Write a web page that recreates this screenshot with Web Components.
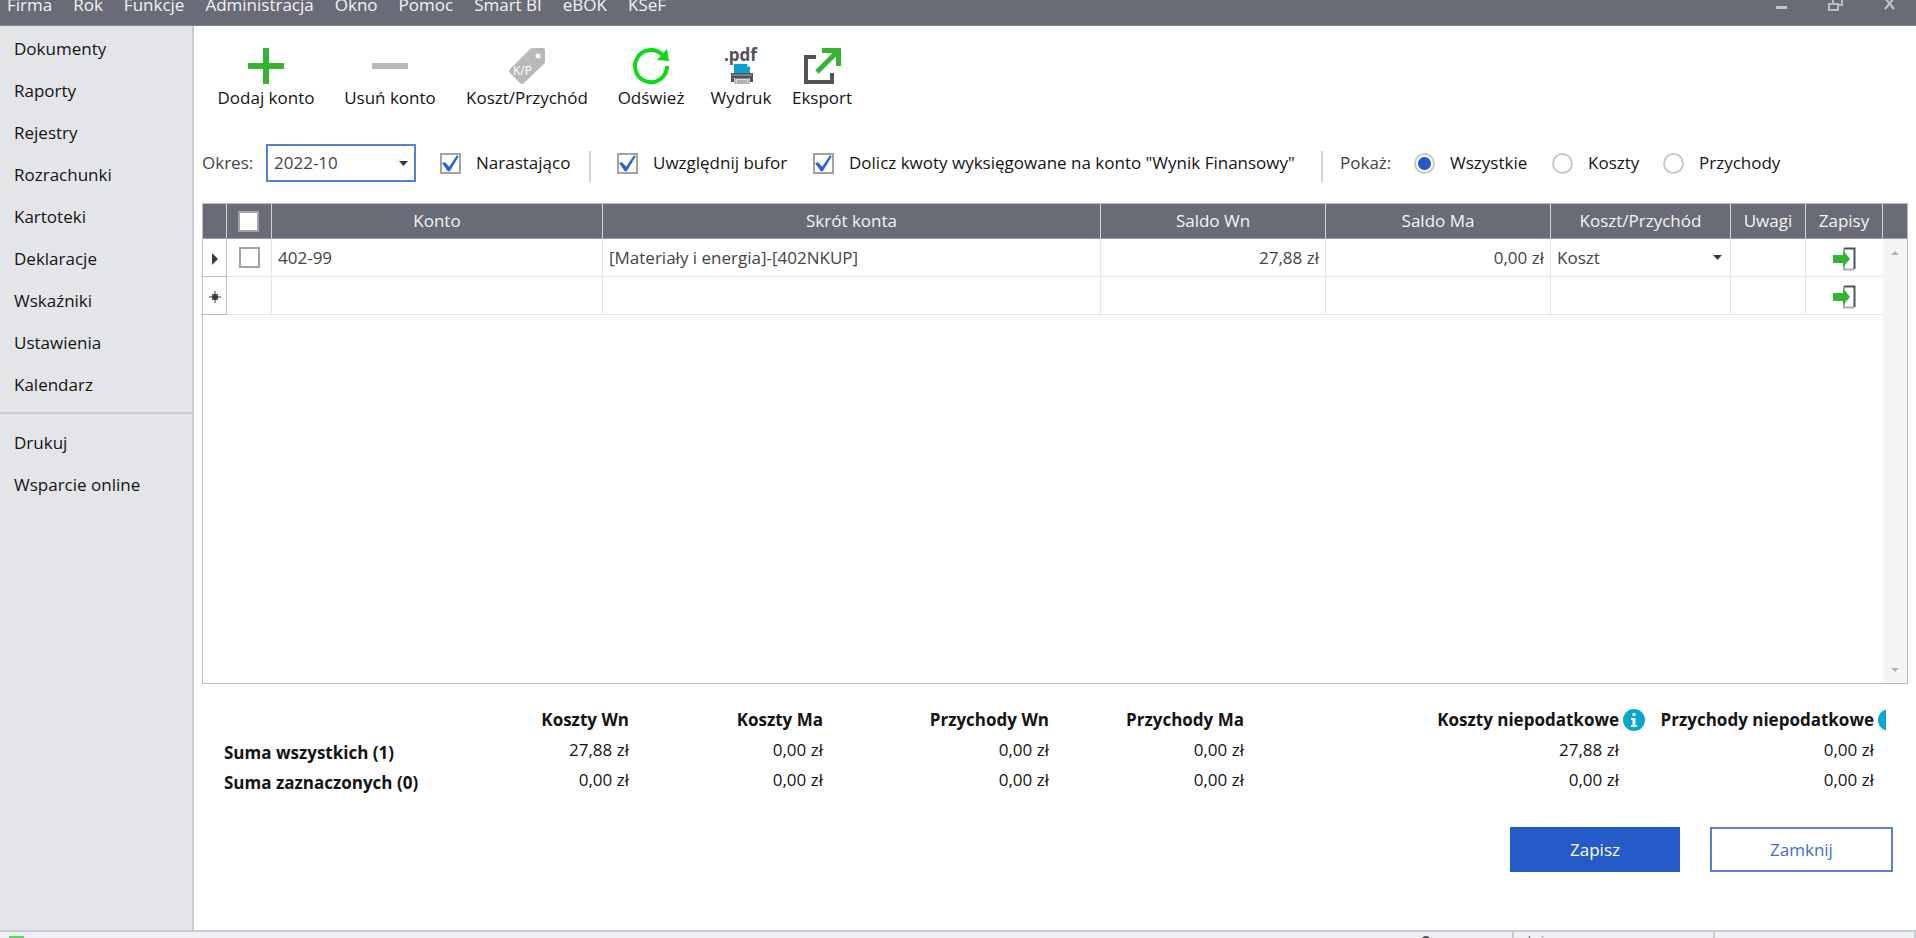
<!DOCTYPE html>
<html lang="pl">
<head>
<meta charset="utf-8">
<title>Koszty i przychody niepodatkowe</title>
<style>
  :root {
    --bar: #696c77;
    --line: #c8cbd4;
    --frame: #bcbcbc;
    --cell-line: #e6e6e6;
    --accent: #255bc9;
    --green: #37b334;
    --ink: #141414;
    --ink-soft: #444;
  }

  body {
    margin: 0;
    font: 17px/24px "Open Sans", "Noto Sans", sans-serif;
    color: var(--ink);
    background: #fff;
  }
</style>
</head>
<body>
<account-app></account-app>

<script>
const ARROW_DOWN = '<svg class="caret" width="9" height="5" viewBox="0 0 9 5" aria-hidden="true"><path d="M0 0h9L4.500 5z" fill="#3a3a3a"/></svg>';

const ICONS = {
  add: '<path d="M18 0v36M0 18h36" stroke="#37b334" stroke-width="6"/>',
  remove: '<path d="M0 18h36" stroke="#b9b9b7" stroke-width="6"/>',
  tag: `
    <path fill-rule="evenodd" fill="#b9b9b7" d="M21 1Q22 0 24 0h10q2 0 2 2v11q0 2-1 3L15 35q-2 2-4 0L1 25q-2-2 0-4zM29 5.500a2.500 2.500 0 1 0 0 5 2.500 2.500 0 0 0 0-5z"/>
    <text x="4" y="27" font-size="12" fill="#fff">K/P</text>`,
  refresh: `
    <path d="M34 18A16 16 0 1 1 29 6.500" fill="none" stroke="#09dc15" stroke-width="4"/>
    <path d="M34 1l2 12-12-1z" fill="#09dc15"/>`,
  pdf: `
    <text x="1" y="13" font-size="17" font-weight="700" fill="#50535a">.pdf</text>
    <path d="M11 16h13l3 3v6H11z" fill="#0aa2d3"/>
    <path d="M24 16v3h3z" fill="#9bdcf0"/>
    <path d="M8 25h22v9h-3v-4H11v4H8z" fill="#50535a"/>
    <path d="M9 27h20" stroke="#a7a9ad"/>
    <path d="M12 30h14v6H12z" fill="#dcdcdc"/>
    <path d="M12 36V30.500h14V36M14 33h10M14 35h10" fill="none" stroke="#85878c"/>`,
  export: `
    <path d="M12 9H2v25h26v-9" fill="none" stroke="#50535a" stroke-width="4"/>
    <path d="M13 24L33 4" stroke="#37b334" stroke-width="5"/>
    <path d="M18 0h19v18h-5V5H18z" fill="#37b334"/>`
};

class BaseElement extends HTMLElement {
  constructor() {
    super();
    this.attachShadow({ mode: 'open' });
  }

  connectedCallback() {
    this.shadowRoot.innerHTML = this.render();
  }
}

class MenuBar extends BaseElement {
  render() {
    const items = ['Firma', 'Rok', 'Funkcje', 'Administracja', 'Okno', 'Pomoc', 'Smart BI', 'eBOK', 'KSeF'];
    return `
      <style>
        :host {
          display: flex;
          justify-content: space-between;
          padding: 0 20px 15px 7px;
          background: var(--bar);
          border-bottom: 1px solid #85878f;
        }
        nav, .window { display: flex; }
        nav { gap: 21px; }
        .window { gap: 40px; }
        button {
          height: 10px;
          padding: 0;
          border: 0;
          background: none;
          color: #f2f2f2;
          font: inherit;
          line-height: 10px;
          white-space: nowrap;
        }
        svg { display: block; }
      </style>
      <nav>${items.map((item) => `<button type="button">${item}</button>`).join('')}</nav>
      <div class="window">
        <button type="button" aria-label="Minimalizuj">
          <svg width="12" height="12"><path d="M0 7.500h11" stroke="#c6c6ca" stroke-width="3"/></svg>
        </button>
        <button type="button" aria-label="Przywróć">
          <svg width="16" height="12"><path d="M1 4h9v6H1zM5 3V-2h9v7h-4" fill="none" stroke="#b9babf" stroke-width="2"/></svg>
        </button>
        <button type="button" aria-label="Zamknij okno">
          <svg width="12" height="12"><path d="M1-2l9 11M10-2L1 9" stroke="#c6c6ca" stroke-width="2"/></svg>
        </button>
      </div>
    `;
  }
}

class SideNav extends BaseElement {
  render() {
    const link = (text) => `<a href="#">${text}</a>`;
    const main = ['Dokumenty', 'Raporty', 'Rejestry', 'Rozrachunki', 'Kartoteki', 'Deklaracje', 'Wskaźniki', 'Ustawienia', 'Kalendarz'];
    const extra = ['Drukuj', 'Wsparcie online'];
    return `
      <style>
        :host {
          display: block;
          flex: none;
          width: 192px;
          padding-top: 2px;
          background: #e4e5e9;
          border-right: 2px solid var(--line);
        }
        a {
          display: block;
          padding: 9px 14px;
          color: var(--ink);
          text-decoration: none;
        }
        hr {
          margin: 6px 0 8px;
          border: 0;
          border-top: 2px solid var(--line);
        }
      </style>
      <nav>${main.map(link).join('')}<hr>${extra.map(link).join('')}</nav>
    `;
  }
}

class ToolButton extends BaseElement {
  render() {
    return `
      <style>
        :host { display: block; }
        button {
          display: flex;
          flex-direction: column;
          align-items: center;
          gap: 2px;
          width: 100%;
          padding: 0;
          border: 0;
          background: none;
          color: var(--ink);
          font: inherit;
          white-space: nowrap;
        }
        svg { overflow: visible; }
      </style>
      <button type="button">
        <svg width="36" height="36" viewBox="0 0 36 36" aria-hidden="true">${ICONS[this.getAttribute('icon')]}</svg>
        <slot></slot>
      </button>
    `;
  }
}

class CheckField extends BaseElement {
  render() {
    return `
      <style>
        :host { display: block; }
        label {
          display: flex;
          align-items: center;
          gap: 15px;
          white-space: nowrap;
        }
        input {
          flex: none;
          display: grid;
          appearance: none;
          width: 21px;
          height: 21px;
          margin: 0;
          border: 2px solid #a3a3a3;
          background: #fff;
        }
        input:checked::before {
          content: "";
          background: #2c62d2;
          clip-path: polygon(0 50%, 18% 45%, 42% 72%, 88% 4%, 98% 12%, 46% 98%, 34% 98%);
        }
      </style>
      <label><input type="checkbox" ${this.hasAttribute('checked') ? 'checked' : ''}><slot></slot></label>
    `;
  }
}

class ShowFilter extends BaseElement {
  render() {
    return `
      <style>
        :host { display: block; }
        fieldset {
          display: grid;
          grid-template-columns: 74px 138px 111px auto;
          align-items: center;
          margin: 0;
          padding: 0;
          border: 0;
        }
        span { color: var(--ink-soft); }
        label {
          display: flex;
          align-items: center;
          gap: 15px;
        }
        input {
          flex: none;
          appearance: none;
          width: 21px;
          height: 21px;
          margin: 0;
          border: 2px solid #c9c9c9;
          border-radius: 50%;
          background: #fff;
        }
        input:checked {
          background: radial-gradient(circle, var(--accent) 6px, #fff 7px);
        }
      </style>
      <fieldset aria-labelledby="show">
        <span id="show">Pokaż:</span>
        <label><input type="radio" name="show" checked>Wszystkie</label>
        <label><input type="radio" name="show">Koszty</label>
        <label><input type="radio" name="show">Przychody</label>
      </fieldset>
    `;
  }
}

class FilterRow extends BaseElement {
  render() {
    return `
      <style>
        :host {
          display: grid;
          grid-template-columns: 64px 174px 149px 28px 196px 508px 19px auto;
          align-items: center;
          justify-content: start;
        }
        .okres { color: var(--ink-soft); }
        .period {
          display: grid;
          align-items: center;
          width: 150px;
        }
        .period > * { grid-area: 1 / 1; }
        select {
          appearance: none;
          height: 38px;
          padding: 0 6px;
          border: 2px solid #5580d6;
          border-radius: 0;
          background: #fff;
          color: var(--ink-soft);
          font: inherit;
        }
        .caret {
          justify-self: end;
          margin-right: 8px;
          pointer-events: none;
        }
        i {
          align-self: end;
          width: 2px;
          height: 31px;
          background: #d4d4da;
        }
      </style>
      <label class="okres" for="period">Okres:</label>
      <div class="period">
        <select id="period"><option>2022-10</option></select>
        ${ARROW_DOWN}
      </div>
      <check-field checked>Narastająco</check-field>
      <i></i>
      <check-field checked>Uwzględnij bufor</check-field>
      <check-field checked>Dolicz kwoty wyksięgowane na konto "Wynik Finansowy"</check-field>
      <i></i>
      <show-filter></show-filter>
    `;
  }
}

class AccountGrid extends BaseElement {
  render() {
    const open = `
      <button type="button" aria-label="Zapisy">
        <svg width="23" height="24" viewBox="0 0 23 24">
          <path d="M11 5V1.500M11 18v4.500h10" fill="none" stroke="#a9abb0" stroke-width="2"/>
          <path d="M11 1.500h10.500V22" fill="none" stroke="#50535a" stroke-width="2"/>
          <path d="M0 8h10V3l7 9-7 8v-4H0z" fill="#37b334"/>
        </svg>
      </button>`;
    return `
      <style>
        :host {
          display: flex;
          border: 1px solid var(--frame);
        }
        .rows { flex: 1; }
        table {
          width: 100%;
          table-layout: fixed;
          border-collapse: separate;
          border-spacing: 0;
          color: var(--ink-soft);
        }
        th, td {
          box-sizing: border-box;
          height: 38px;
          padding: 0 6px;
          border-right: 1px solid var(--cell-line);
          border-bottom: 1px solid var(--cell-line);
          text-align: left;
          font-weight: 400;
          white-space: nowrap;
        }
        td:last-child { border-right-color: transparent; }
        thead th {
          height: 35px;
          background: var(--bar);
          border-color: #d2d2d4;
          border-bottom-color: #9a9ca3;
          color: #f4f4f4;
          text-align: center;
        }
        tbody th {
          padding: 0;
          border-color: var(--frame);
          text-align: center;
        }
        .num { text-align: right; }
        .mark { padding: 0 0 0 12px; }
        thead .mark { padding-left: 11px; }
        .open { text-align: center; }
        th svg, .open svg { display: inline-block; vertical-align: middle; }
        button {
          padding: 0;
          border: 0;
          background: none;
          line-height: 0;
        }
        .kind { display: grid; align-items: center; }
        .kind > * { grid-area: 1 / 1; }
        select {
          appearance: none;
          padding: 0;
          border: 0;
          background: none;
          color: inherit;
          font: inherit;
        }
        .caret {
          justify-self: end;
          margin-right: 2px;
          pointer-events: none;
        }
        .scroll {
          display: flex;
          flex-direction: column;
          justify-content: space-between;
          align-items: center;
          width: 24px;
          background: #f4f4f4;
        }
        .scroll::before {
          content: "";
          align-self: stretch;
          height: 34px;
          margin-bottom: 12px;
          background: var(--bar);
          border-bottom: 1px solid #9a9ca3;
        }
        .scroll .down { margin: auto 0 11px; }
      </style>
      <div class="rows">
        <table>
          <colgroup>
            <col style="width: 24px"><col style="width: 45px"><col style="width: 331px"><col>
            <col style="width: 225px"><col style="width: 225px"><col style="width: 180px">
            <col style="width: 75px"><col style="width: 77px">
          </colgroup>
          <thead>
            <tr>
              <th></th>
              <th class="mark"><check-field aria-label="Zaznacz wszystkie"></check-field></th>
              <th>Konto</th><th>Skrót konta</th><th>Saldo Wn</th><th>Saldo Ma</th>
              <th>Koszt/Przychód</th><th>Uwagi</th><th>Zapisy</th>
            </tr>
          </thead>
          <tbody>
            <tr>
              <th><svg width="6" height="12"><path d="M0 0l6 6-6 6z" fill="#3a3a3a"/></svg></th>
              <td class="mark"><check-field aria-label="Zaznacz"></check-field></td>
              <td>402-99</td>
              <td>[Materiały i energia]-[402NKUP]</td>
              <td class="num">27,88 zł</td>
              <td class="num">0,00 zł</td>
              <td>
                <div class="kind">
                  <select aria-label="Koszt/Przychód"><option>Koszt</option><option>Przychód</option></select>
                  ${ARROW_DOWN}
                </div>
              </td>
              <td></td>
              <td class="open">${open}</td>
            </tr>
            <tr>
              <th><svg width="12" height="12"><path d="M6 0v12M0 6h12M3 3l6 6M9 3l-6 6" stroke="#3a3a3a"/><circle cx="6" cy="6" r="3" fill="#3a3a3a"/></svg></th>
              <td></td><td></td><td></td><td></td><td></td><td></td><td></td>
              <td class="open">${open}</td>
            </tr>
          </tbody>
        </table>
      </div>
      <div class="scroll">
        <svg width="8" height="4"><path d="M0 4h8L4 0z" fill="#b4b4b4"/></svg>
        <svg class="down" width="8" height="4"><path d="M0 0h8L4 4z" fill="#b4b4b4"/></svg>
      </div>
    `;
  }
}

class TotalsTable extends BaseElement {
  render() {
    const info = '<svg width="22" height="22" viewBox="0 0 22 22"><circle cx="11" cy="11" r="11" fill="#08a5d0"/><path d="M9.500 4h3v3h-3zM8 9h4.500v7H14v2H8v-2h1.500v-5H8z" fill="#fff"/></svg>';
    return `
      <style>
        :host { display: block; }
        table {
          width: 100%;
          table-layout: fixed;
          border-collapse: collapse;
        }
        th, td {
          height: 30px;
          padding: 0;
          text-align: right;
          white-space: nowrap;
        }
        tbody th {
          padding-left: 22px;
          text-align: left;
          vertical-align: bottom;
        }
        .info {
          padding-left: 4px;
          overflow: hidden;
          text-align: left;
          text-overflow: clip;
        }
        svg { display: block; }
      </style>
      <table>
        <colgroup>
          <col><col style="width: 209px"><col style="width: 194px"><col style="width: 226px">
          <col style="width: 195px"><col style="width: 375px"><col style="width: 30px">
          <col style="width: 225px"><col style="width: 12px">
        </colgroup>
        <thead>
          <tr>
            <td></td><th>Koszty Wn</th><th>Koszty Ma</th><th>Przychody Wn</th><th>Przychody Ma</th>
            <th>Koszty niepodatkowe</th><td class="info">${info}</td>
            <th>Przychody niepodatkowe</th><td class="info">${info}</td>
          </tr>
        </thead>
        <tbody>
          <tr>
            <th>Suma wszystkich (1)</th><td>27,88 zł</td><td>0,00 zł</td><td>0,00 zł</td><td>0,00 zł</td>
            <td>27,88 zł</td><td></td><td>0,00 zł</td><td></td>
          </tr>
          <tr>
            <th>Suma zaznaczonych (0)</th><td>0,00 zł</td><td>0,00 zł</td><td>0,00 zł</td><td>0,00 zł</td>
            <td>0,00 zł</td><td></td><td>0,00 zł</td><td></td>
          </tr>
        </tbody>
      </table>
    `;
  }
}

class PushButton extends BaseElement {
  render() {
    return `
      <style>
        :host { display: block; width: 183px; }
        :host([primary]) { width: 170px; }
        button {
          width: 100%;
          height: 45px;
          padding: 0;
          border: 2px solid #5580d6;
          background: #fff;
          color: #3f6fd0;
          font: inherit;
        }
        :host([primary]) button {
          border-color: var(--accent);
          background: var(--accent);
          color: #fff;
        }
      </style>
      <button type="button"><slot></slot></button>
    `;
  }
}

class StatusBar extends BaseElement {
  render() {
    return `
      <style>
        :host {
          display: flex;
          flex: none;
          box-sizing: border-box;
          height: 8px;
          background: #eff0f4;
          border-top: 2px solid var(--line);
          font-size: 11px;
          line-height: 12px;
          color: var(--ink-soft);
        }
        div {
          display: flex;
          align-items: start;
          box-sizing: border-box;
          width: 201px;
          padding: 2px 4px 0;
          border-right: 2px solid var(--line);
        }
        .state {
          flex: 1;
          justify-content: space-between;
          padding: 4px 81px 0 9px;
        }
        svg { flex: none; }
      </style>
      <div class="state">
        <svg width="15" height="15"><rect width="15" height="15" rx="1" fill="#4fdc5a"/></svg>
        <svg width="10" height="15"><circle cx="5" cy="5" r="5" fill="#50535a"/></svg>
      </div>
      <div>admin</div>
      <div></div>
    `;
  }
}

class AccountApp extends BaseElement {
  render() {
    return `
      <style>
        :host {
          display: flex;
          flex-direction: column;
          height: 100vh;
          overflow: hidden;
        }
        .body {
          display: flex;
          flex: 1;
          min-height: 0;
        }
        main {
          display: flex;
          flex: 1;
          flex-direction: column;
          min-width: 0;
          padding: 22px 8px 58px;
        }
        .tools {
          display: grid;
          grid-template-columns: 128px 120px 154px 94px 86px 76px;
        }
        filter-row { margin: 34px 0 21px; }
        account-grid { flex: 1; }
        totals-table { margin: 21px 22px 32px 0; }
        .actions {
          display: flex;
          justify-content: flex-end;
          gap: 30px;
          margin-right: 15px;
        }
      </style>
      <menu-bar></menu-bar>
      <div class="body">
        <side-nav></side-nav>
        <main>
          <div class="tools">
            <tool-button icon="add">Dodaj konto</tool-button>
            <tool-button icon="remove">Usuń konto</tool-button>
            <tool-button icon="tag">Koszt/Przychód</tool-button>
            <tool-button icon="refresh">Odśwież</tool-button>
            <tool-button icon="pdf">Wydruk</tool-button>
            <tool-button icon="export">Eksport</tool-button>
          </div>
          <filter-row></filter-row>
          <account-grid></account-grid>
          <totals-table></totals-table>
          <div class="actions">
            <push-button primary>Zapisz</push-button>
            <push-button>Zamknij</push-button>
          </div>
        </main>
      </div>
      <status-bar></status-bar>
    `;
  }
}

customElements.define('menu-bar', MenuBar);
customElements.define('side-nav', SideNav);
customElements.define('tool-button', ToolButton);
customElements.define('check-field', CheckField);
customElements.define('show-filter', ShowFilter);
customElements.define('filter-row', FilterRow);
customElements.define('account-grid', AccountGrid);
customElements.define('totals-table', TotalsTable);
customElements.define('push-button', PushButton);
customElements.define('status-bar', StatusBar);
customElements.define('account-app', AccountApp);
</script>
</body>
</html>
